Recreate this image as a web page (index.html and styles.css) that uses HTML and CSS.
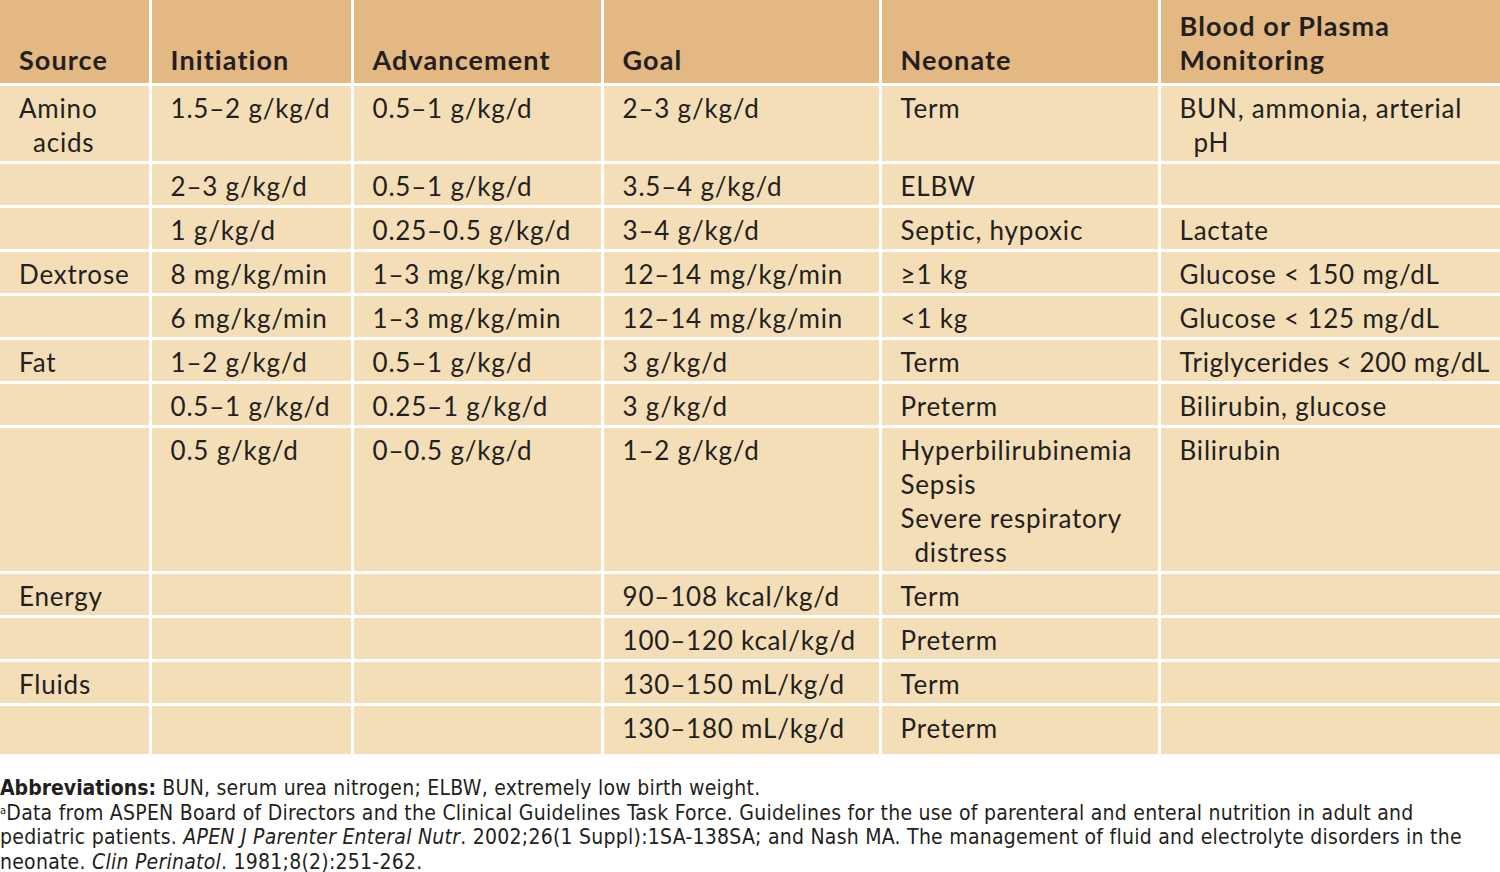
FILE: index.html
```html
<!DOCTYPE html>
<html>
<head>
<meta charset="utf-8">
<link rel="stylesheet" href="styles.css">
</head>
<body>
<table class="tbl">
<colgroup>
<col class="c1"><col class="c2"><col class="c3"><col class="c4"><col class="c5"><col class="c6">
</colgroup>
<thead>
<tr><th>Source</th><th>Initiation</th><th>Advancement</th><th>Goal</th><th>Neonate</th><th>Blood or Plasma Monitoring</th></tr>
</thead>
<tbody>
<tr><td>Amino acids</td><td>1.5–2 g/kg/d</td><td>0.5–1 g/kg/d</td><td>2–3 g/kg/d</td><td>Term</td><td>BUN, ammonia, arterial pH</td></tr>
<tr><td></td><td>2–3 g/kg/d</td><td>0.5–1 g/kg/d</td><td>3.5–4 g/kg/d</td><td>ELBW</td><td></td></tr>
<tr><td></td><td>1 g/kg/d</td><td>0.25–0.5 g/kg/d</td><td>3–4 g/kg/d</td><td>Septic, hypoxic</td><td>Lactate</td></tr>
<tr><td>Dextrose</td><td>8 mg/kg/min</td><td>1–3 mg/kg/min</td><td>12–14 mg/kg/min</td><td>≥1 kg</td><td>Glucose &lt; 150 mg/dL</td></tr>
<tr><td></td><td>6 mg/kg/min</td><td>1–3 mg/kg/min</td><td>12–14 mg/kg/min</td><td>&lt;1 kg</td><td>Glucose &lt; 125 mg/dL</td></tr>
<tr><td>Fat</td><td>1–2 g/kg/d</td><td>0.5–1 g/kg/d</td><td>3 g/kg/d</td><td>Term</td><td class="tight">Triglycerides &lt; 200 mg/dL</td></tr>
<tr><td></td><td>0.5–1 g/kg/d</td><td>0.25–1 g/kg/d</td><td>3 g/kg/d</td><td>Preterm</td><td>Bilirubin, glucose</td></tr>
<tr><td></td><td>0.5 g/kg/d</td><td>0–0.5 g/kg/d</td><td>1–2 g/kg/d</td><td><div>Hyperbilirubinemia</div><div>Sepsis</div><div>Severe respiratory distress</div></td><td>Bilirubin</td></tr>
<tr><td>Energy</td><td></td><td></td><td>90–108 kcal/kg/d</td><td>Term</td><td></td></tr>
<tr><td></td><td></td><td></td><td>100–120 kcal/kg/d</td><td>Preterm</td><td></td></tr>
<tr><td>Fluids</td><td></td><td></td><td>130–150 mL/kg/d</td><td>Term</td><td></td></tr>
<tr class="last"><td></td><td></td><td></td><td>130–180 mL/kg/d</td><td>Preterm</td><td></td></tr>
</tbody>
</table>
<div class="notes">
<p><b>Abbreviations:</b> BUN, serum urea nitrogen; ELBW, extremely low birth weight.</p>
<p><sup>a</sup>Data from ASPEN Board of Directors and the Clinical Guidelines Task Force. Guidelines for the use of parenteral and enteral nutrition in adult and<br>pediatric patients. <i>APEN J Parenter Enteral Nutr</i>. 2002;26(1 Suppl):1SA-138SA; and Nash MA. The management of fluid and electrolyte disorders in the<br>neonate. <i>Clin Perinatol</i>. 1981;8(2):251-262.</p>
</div>
</body>
</html>
```

FILE: styles.css
```css
html, body {
  margin: 0;
  padding: 0;
  background: #ffffff;
}
body {
  width: 1500px;
  color: #231f20;
  font-family: Lato, "Open Sans", sans-serif;
}
.tbl {
  width: 1500px;
  border-collapse: collapse;
  table-layout: fixed;
  font-size: 26px;
  line-height: 34px;
  letter-spacing: 0.8px;
}
.c1 { width: 150px; }
.c2 { width: 202px; }
.c3 { width: 250px; }
.c4 { width: 278px; }
.c5 { width: 279px; }
.c6 { width: 341px; }
.tbl th, .tbl td {
  border-left: 3px solid #ffffff;
  text-align: left;
  padding: 5px 4px 2px 33px;
  text-indent: -14px;
  vertical-align: top;
}
.tbl th:first-child, .tbl td:first-child {
  border-left: none;
  padding-left: 33px;
}
.tbl th {
  background: #e4b883;
  font-weight: 700;
  font-size: 27px;
  letter-spacing: 1.1px;
  vertical-align: bottom;
  padding: 9px 4px 6px 19px;
  text-indent: 0;
}
.tbl th:first-child {
  padding-left: 19px;
}
.tbl td {
  background: #f4deb7;
}
.tbl tbody tr {
  border-top: 3px solid #ffffff;
}
.tbl tr.last td {
  padding-bottom: 9px;
}
.tbl td.tight {
  padding-right: 0;
  letter-spacing: 0.6px;
  white-space: nowrap;
}
.notes {
  margin-top: 22px;
  font-family: "DejaVu Sans", sans-serif;
  font-stretch: condensed;
  font-size: 21px;
  line-height: 24.5px;
  letter-spacing: 0.25px;
  white-space: nowrap;
}
.notes p {
  margin: 0;
}
.notes b {
  font-weight: 700;
  letter-spacing: 0;
}
.notes sup {
  font-size: 11px;
  vertical-align: 6px;
  line-height: 0;
}
```
